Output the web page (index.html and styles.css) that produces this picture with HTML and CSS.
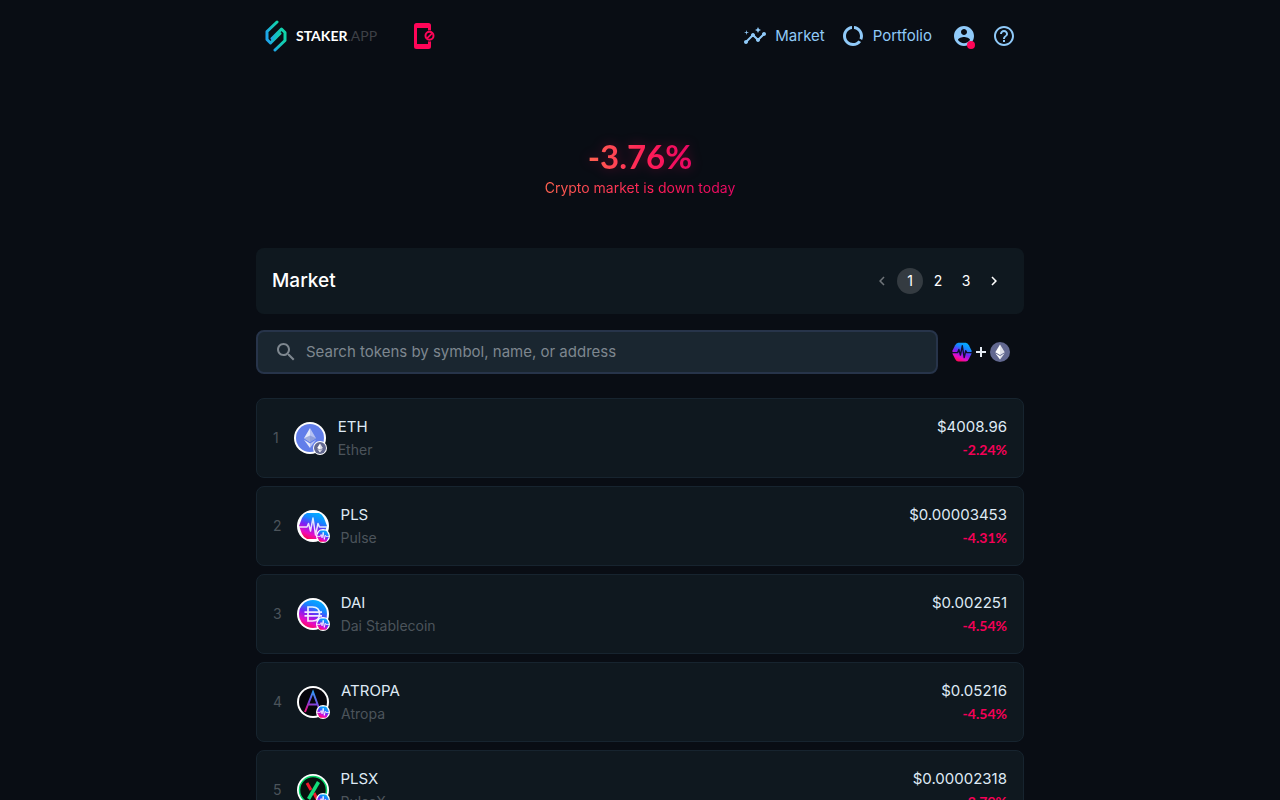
FILE: index.html
```
<!DOCTYPE html>
<html lang="en">
<head>
  <meta charset="UTF-8">
  <meta name="viewport" content="width=device-width, initial-scale=1.0">
  <title>Staker.app</title>
  <link rel="stylesheet" href="styles.css">
</head>
<body>
  <!-- Shared token artwork -->
  <svg class="sprite" width="0" height="0" aria-hidden="true">
    <defs>
      <linearGradient id="logo-fill" x1="0" y1="0.7" x2="1" y2="0.3">
        <stop offset="0" stop-color="#1ea4ea"/>
        <stop offset="0.5" stop-color="#16c4c0"/>
        <stop offset="1" stop-color="#10d4a8"/>
      </linearGradient>
      <linearGradient id="pulse-fill" x1="0.75" y1="0" x2="0.3" y2="1">
        <stop offset="0" stop-color="#00b4ff"/>
        <stop offset="0.3" stop-color="#1684ff"/>
        <stop offset="0.55" stop-color="#7a20f5"/>
        <stop offset="0.8" stop-color="#e80cc4"/>
        <stop offset="1" stop-color="#ff0a50"/>
      </linearGradient>
      <linearGradient id="atropa-fill" x1="0.7" y1="0" x2="0.3" y2="1">
        <stop offset="0" stop-color="#2ba0f5"/>
        <stop offset="0.55" stop-color="#7d45e0"/>
        <stop offset="1" stop-color="#e81283"/>
      </linearGradient>
    </defs>
    <symbol id="eth-mark" viewBox="0 0 32 32">
      <path fill="#fff" d="M16 4L8.500 16.300L16 20.700L23.500 16.300Z"/>
      <path fill="#fff" d="M8.500 18L16 28L23.500 18L16 22.400Z"/>
      <path fill="#626890" fill-opacity="0.200" d="M16 4V20.700L23.500 16.300ZM16 22.400V28L23.500 18Z"/>
    </symbol>
    <symbol id="badge-eth" viewBox="0 0 32 32">
      <circle cx="16" cy="16" r="16" fill="#626890"/>
      <use href="#eth-mark"/>
    </symbol>
    <symbol id="badge-pulse" viewBox="0 0 32 32">
      <path fill="url(#pulse-fill)" d="M10 1H22Q25 1 27 5L31 13Q32 16 31 19L27 27Q25 31 22 31H10Q7 31 5 27L1 19Q0 16 1 13L5 5Q7 1 10 1Z"/>
      <path fill="none" stroke="currentColor" stroke-width="2.200" stroke-linejoin="round" d="M0 17H9L11 12L13.500 21L16.500 6L19.500 25L22 14L23.500 17H32"/>
    </symbol>
  </svg>

  <div class="container">
    <header class="header">
      <a class="logo" href="#">
        <svg class="logo-icon" viewBox="0 0 22 32" fill="none" stroke="url(#logo-fill)" stroke-width="3" stroke-linecap="round" stroke-linejoin="round">
          <path d="M12 2L2 11.500V19.500L5.500 23L15 13.500"/>
          <path d="M10 30L20 20.500V12.500L16.500 9L7 18.500"/>
        </svg>
        <span class="logo-text">STAKER<span class="logo-suffix">.APP</span></span>
      </a>
      <button class="icon-button phone-button" aria-label="Phone disconnected">
        <svg width="22" height="28" viewBox="0 0 22 28">
          <path fill="#ff0558" d="M3.500 1H15.500A2.500 2.500 0 0 1 18 3.500V8.500A6 6 0 0 0 15 8.500V6H4V22H15V19.200A6 6 0 0 0 18 19.200V24.500A2.500 2.500 0 0 1 15.500 27H3.500A2.500 2.500 0 0 1 1 24.500V3.500A2.500 2.500 0 0 1 3.500 1Z"/>
          <circle cx="16.500" cy="13.800" r="4" fill="none" stroke="#ff0558" stroke-width="2"/>
          <path d="M14 16.300L19 11.300" stroke="#ff0558" stroke-width="1.800"/>
        </svg>
      </button>
      <nav class="nav">
        <a class="nav-link" href="#">
          <svg class="icon" viewBox="0 0 24 24"><path d="M21 8c-1.450 0-2.260 1.440-1.930 2.510l-3.550 3.560c-.3-.09-.74-.09-1.040 0l-2.550-2.550C12.270 10.450 11.460 9 10 9c-1.450 0-2.270 1.440-1.930 2.520l-4.560 4.550C2.440 15.740 1 16.550 1 18c0 1.100.9 2 2 2 1.450 0 2.260-1.440 1.930-2.510l4.550-4.560c.3.09.74.09 1.040 0l2.550 2.550C12.730 16.550 13.540 18 15 18c1.450 0 2.270-1.440 1.930-2.520l3.560-3.550C21.560 12.260 23 11.450 23 10c0-1.100-.9-2-2-2z"/><path d="M15 9l.94-2.070L18 6l-2.060-.93L15 3l-.92 2.070L12 6l2.080.93zM3.500 11L4 9l2-.5L4 8l-.5-2L3 8l-2 .5L3 9z"/></svg>
          Market
        </a>
        <a class="nav-link" href="#">
          <svg class="icon" viewBox="0 0 24 24"><path d="M13 2.050v3.030c3.390.49 6 3.390 6 6.920 0 .9-.18 1.750-.48 2.540l2.600 1.530c.56-1.240.88-2.620.88-4.070 0-5.180-3.950-9.450-9-9.950zM12 19c-3.870 0-7-3.130-7-7 0-3.530 2.610-6.430 6-6.920V2.050c-5.060.5-9 4.760-9 9.950 0 5.520 4.470 10 9.990 10 3.310 0 6.240-1.610 8.060-4.090l-2.600-1.530C16.170 17.980 14.210 19 12 19z"/></svg>
          Portfolio
        </a>
        <div class="nav-actions">
          <button class="icon-button account" aria-label="Account">
            <svg class="icon" viewBox="0 0 24 24"><path d="M12 2C6.480 2 2 6.480 2 12s4.480 10 10 10 10-4.480 10-10S17.520 2 12 2zm0 3c1.660 0 3 1.340 3 3s-1.340 3-3 3-3-1.340-3-3 1.340-3 3-3zm0 14.200c-2.500 0-4.710-1.280-6-3.220.03-1.990 4-3.080 6-3.080 1.990 0 5.970 1.090 6 3.080-1.290 1.940-3.500 3.220-6 3.220z"/></svg>
            <span class="dot"></span>
          </button>
          <button class="icon-button" aria-label="Help">
            <svg class="icon" viewBox="0 0 24 24"><path d="M11 18h2v-2h-2v2zm1-16C6.480 2 2 6.480 2 12s4.480 10 10 10 10-4.480 10-10S17.520 2 12 2zm0 18c-4.410 0-8-3.590-8-8s3.590-8 8-8 8 3.590 8 8-3.590 8-8 8zm0-14c-2.210 0-4 1.790-4 4h2c0-1.100.9-2 2-2s2 .9 2 2c0 2-3 1.750-3 5h2c0-2.250 3-2.500 3-5 0-2.210-1.790-4-4-4z"/></svg>
          </button>
        </div>
      </nav>
    </header>

    <main>
      <section class="summary">
        <div class="summary-value">-3.76%</div>
        <div class="summary-text">Crypto market is down today</div>
      </section>

      <section class="market-header">
        <h1>Market</h1>
        <div class="pagination">
          <button class="page" aria-label="Previous page" disabled>
            <svg class="chevron" viewBox="0 0 24 24"><path d="M15.410 7.410L14 6l-6 6 6 6 1.410-1.410L10.830 12z"/></svg>
          </button>
          <button class="page active">1</button>
          <button class="page">2</button>
          <button class="page">3</button>
          <button class="page" aria-label="Next page">
            <svg class="chevron" viewBox="0 0 24 24"><path d="M10 6L8.590 7.410 13.170 12l-4.580 4.590L10 18l6-6z"/></svg>
          </button>
        </div>
      </section>

      <div class="toolbar">
        <label class="search">
          <svg class="icon" viewBox="0 0 24 24"><path d="M15.500 14h-.79l-.28-.27C15.410 12.590 16 11.110 16 9.500 16 5.910 13.090 3 9.500 3S3 5.910 3 9.500 5.910 16 9.500 16c1.610 0 3.090-.59 4.230-1.570l.27.28v.79l5 4.990L20.490 19l-4.990-5zm-6 0C7.010 14 5 11.990 5 9.500S7.010 5 9.500 5 14 7.010 14 9.500 11.990 14 9.500 14z"/></svg>
          <input type="text" class="search-input" aria-label="Search tokens" placeholder="Search tokens by symbol, name, or address">
        </label>
        <button class="networks" aria-label="Networks">
          <svg class="network-icon" viewBox="0 0 32 32"><use href="#badge-pulse"/></svg>
          <svg class="plus" viewBox="0 0 10 10"><path d="M5 0V10M0 5H10"/></svg>
          <svg class="network-icon" viewBox="0 0 32 32"><use href="#badge-eth"/></svg>
        </button>
      </div>

      <div class="token-list">
        <a class="token" href="#">
          <span class="rank">1</span>
          <span class="token-icon">
            <svg class="token-image" viewBox="0 0 32 32">
              <circle cx="16" cy="16" r="16" fill="#fff"/>
              <circle cx="16" cy="16" r="14" fill="#627eea"/>
              <path fill="#e4e9fb" d="M16 6L10 16.300L16 20V6ZM10 17.700L16 26V21.500Z"/>
              <path fill="#b5c1f3" d="M16 6L22 16.300L16 20ZM22 17.700L16 26V21.500Z"/>
              <path fill="#7587c9" fill-opacity="0.600" d="M10 16.300L16 13.500L22 16.300L16 20Z"/>
            </svg>
            <span class="badge"><svg viewBox="0 0 32 32"><use href="#badge-eth"/></svg></span>
          </span>
          <span class="token-info"><span class="symbol">ETH</span><span class="name">Ether</span></span>
          <span class="token-price"><span class="price">$4008.96</span><span class="change">-2.24%</span></span>
        </a>

        <a class="token" href="#">
          <span class="rank">2</span>
          <span class="token-icon">
            <svg class="token-image" viewBox="0 0 32 32">
              <circle cx="16" cy="16" r="16" fill="#fff"/>
              <path fill="url(#pulse-fill)" d="M10 3H22Q25 4 27 8L30 16L27 24Q25 28 22 29H10Q7 28 5 24L2 16L5 8Q7 4 10 3Z"/>
              <path fill="none" stroke="#fff" stroke-opacity="0.850" stroke-width="1.500" stroke-linejoin="round" d="M2 17H10L11.500 13.500L13.500 21L16 8L18.500 25L21 13.500L22.500 17H30"/>
            </svg>
            <span class="badge"><svg viewBox="0 0 32 32"><use href="#badge-pulse"/></svg></span>
          </span>
          <span class="token-info"><span class="symbol">PLS</span><span class="name">Pulse</span></span>
          <span class="token-price"><span class="price">$0.00003453</span><span class="change">-4.31%</span></span>
        </a>

        <a class="token" href="#">
          <span class="rank">3</span>
          <span class="token-icon">
            <svg class="token-image" viewBox="0 0 32 32">
              <circle cx="16" cy="16" r="16" fill="#fff"/>
              <circle cx="16" cy="16" r="14" fill="url(#pulse-fill)"/>
              <path fill="none" stroke="#fff" stroke-opacity="0.900" stroke-width="1.700" d="M11 9H15.500Q22.500 9 22.500 16T15.500 23H11ZM7.500 14.200H25M7.500 17.800H25"/>
            </svg>
            <span class="badge"><svg viewBox="0 0 32 32"><use href="#badge-pulse"/></svg></span>
          </span>
          <span class="token-info"><span class="symbol">DAI</span><span class="name">Dai Stablecoin</span></span>
          <span class="token-price"><span class="price">$0.002251</span><span class="change">-4.54%</span></span>
        </a>

        <a class="token" href="#">
          <span class="rank">4</span>
          <span class="token-icon">
            <svg class="token-image" viewBox="0 0 32 32">
              <circle cx="16" cy="16" r="16" fill="#fff"/>
              <circle cx="16" cy="16" r="14" fill="#05050b"/>
              <path fill="none" stroke="url(#atropa-fill)" stroke-width="2" d="M8 26L16 6L23 25M11 18.500H21"/>
            </svg>
            <span class="badge"><svg viewBox="0 0 32 32"><use href="#badge-pulse"/></svg></span>
          </span>
          <span class="token-info"><span class="symbol">ATROPA</span><span class="name">Atropa</span></span>
          <span class="token-price"><span class="price">$0.05216</span><span class="change">-4.54%</span></span>
        </a>

        <a class="token" href="#">
          <span class="rank">5</span>
          <span class="token-icon">
            <svg class="token-image" viewBox="0 0 32 32">
              <circle cx="16" cy="16" r="16" fill="#fff"/>
              <circle cx="16" cy="16" r="13.500" fill="#07110e" stroke="#08d66b" stroke-width="1.500"/>
              <path d="M10 9L14 16M17 19L20 25" stroke="#f0182d" stroke-width="3"/>
              <path d="M21.500 8L11.500 25" stroke="#12dc79" stroke-width="3.500"/>
            </svg>
            <span class="badge"><svg viewBox="0 0 32 32"><use href="#badge-pulse"/></svg></span>
          </span>
          <span class="token-info"><span class="symbol">PLSX</span><span class="name">PulseX</span></span>
          <span class="token-price"><span class="price">$0.00002318</span><span class="change">-3.79%</span></span>
        </a>
      </div>
    </main>
  </div>
</body>
</html>
```
FILE: styles.css
```
* {
  box-sizing: border-box;
}
html {
  scrollbar-width: none;
}
body {
  margin: 0;
  background-color: #090d14;
  color: #fff;
  font-family: Inter, "Liberation Sans", sans-serif;
  font-size: 15px;
  line-height: 24px;
}
a {
  color: inherit;
  text-decoration: none;
}
button {
  padding: 0;
  border: none;
  background: none;
  color: inherit;
  font: inherit;
  cursor: pointer;
}
svg {
  display: block;
  flex: none;
}
.sprite {
  position: absolute;
}
.container {
  max-width: 768px;
  margin: 0 auto;
}
.icon {
  width: 24px;
  height: 24px;
  fill: currentColor;
}

/* Header */
.header {
  display: flex;
  align-items: center;
  height: 72px;
  padding: 0 8px;
}
.logo {
  display: flex;
  align-items: center;
  gap: 8px;
}
.logo-icon {
  width: 24px;
  height: 32px;
}
.logo-text {
  font-family: Lato, sans-serif;
  font-size: 14px;
  font-weight: 700;
}
.logo-suffix {
  color: #3d4046;
  font-weight: 400;
}
.phone-button {
  margin-left: 36px;
}
.nav {
  display: flex;
  align-items: center;
  gap: 16px;
  margin-left: auto;
  color: #90caf9;
}
.nav-link {
  display: flex;
  align-items: center;
  gap: 8px;
}
.nav-actions {
  display: flex;
  gap: 16px;
  margin-left: 4px;
}
.account {
  position: relative;
}
.dot {
  position: absolute;
  right: 1px;
  bottom: -1px;
  width: 8px;
  height: 8px;
  border-radius: 50%;
  background-color: #ff0558;
}

/* Daily summary */
.summary {
  display: flex;
  flex-direction: column;
  align-items: center;
  padding: 64px 0 48px;
}
.summary-value,
.summary-text {
  background: linear-gradient(90deg, #ff6250, #ff1b58 60%, #e80663);
  background-clip: text;
  -webkit-background-clip: text;
  color: transparent;
}
.summary-value {
  font-family: Lato, sans-serif;
  font-size: 33px;
  font-weight: 700;
  line-height: 40px;
  filter: drop-shadow(0 0 6px rgba(255, 5, 88, 0.3));
}
.summary-text {
  font-size: 14px;
}

/* Market title and paging */
.market-header {
  display: flex;
  align-items: center;
  justify-content: space-between;
  padding: 16px;
  border-radius: 8px;
  background-color: #0f181f;
}
.market-header h1 {
  margin: 0;
  font-size: 19px;
  font-weight: 500;
  line-height: 34px;
}
.pagination {
  display: flex;
}
.page {
  display: flex;
  align-items: center;
  justify-content: center;
  width: 26px;
  height: 26px;
  margin: 0 1px;
  border-radius: 50%;
  font-size: 14px;
}
.page.active {
  background-color: #343b41;
}
.page:disabled {
  opacity: 0.4;
}
.chevron {
  width: 18px;
  height: 18px;
  fill: currentColor;
}

/* Search */
.toolbar {
  display: flex;
  margin: 16px 0 24px;
}
.search {
  display: flex;
  flex: 1;
  align-items: center;
  gap: 8px;
  height: 44px;
  padding: 0 16px;
  border: 2px solid #27344a;
  border-radius: 8px;
  background-color: #1a2630;
  color: #7e878f;
}
.search-input {
  flex: 1;
  min-width: 0;
  padding: 0;
  border: none;
  outline: none;
  background: none;
  color: #fff;
  font: inherit;
}
.search-input::placeholder {
  color: #7e878f;
  opacity: 1;
}
.networks {
  display: flex;
  align-items: center;
  gap: 4px;
  padding: 0 14px;
  color: #0b1030;
}
.network-icon {
  width: 20px;
  height: 20px;
}
.plus {
  width: 10px;
  height: 10px;
  stroke: #e3eaf2;
  stroke-width: 2;
}

/* Tokens */
.token-list {
  display: flex;
  flex-direction: column;
  gap: 8px;
}
.token {
  display: flex;
  align-items: center;
  height: 80px;
  padding: 0 16px;
  border: 1px solid #17242f;
  border-radius: 8px;
  background-color: #0f181f;
}
.token:hover {
  background-color: #15212a;
}
.rank {
  color: #4c545b;
  font-size: 14px;
}
.token-icon {
  position: relative;
  margin: 0 12px 0 15px;
}
.token-image {
  width: 32px;
  height: 32px;
}
.badge {
  position: absolute;
  right: -1px;
  bottom: -1px;
  width: 14px;
  height: 14px;
  padding: 1px;
  border-radius: 50%;
  background-color: #fff;
  color: #fff;
}
.badge svg {
  width: 12px;
  height: 12px;
}
.token-info,
.token-price {
  display: flex;
  flex-direction: column;
}
.token-price {
  margin-left: auto;
  text-align: right;
}
.symbol,
.price {
  color: #dfeaf5;
}
.name,
.change {
  font-size: 14px;
  line-height: 22px;
}
.name {
  color: #4c545b;
}
.change {
  color: #f50057;
  font-family: Lato, sans-serif;
  font-weight: 700;
}
```
